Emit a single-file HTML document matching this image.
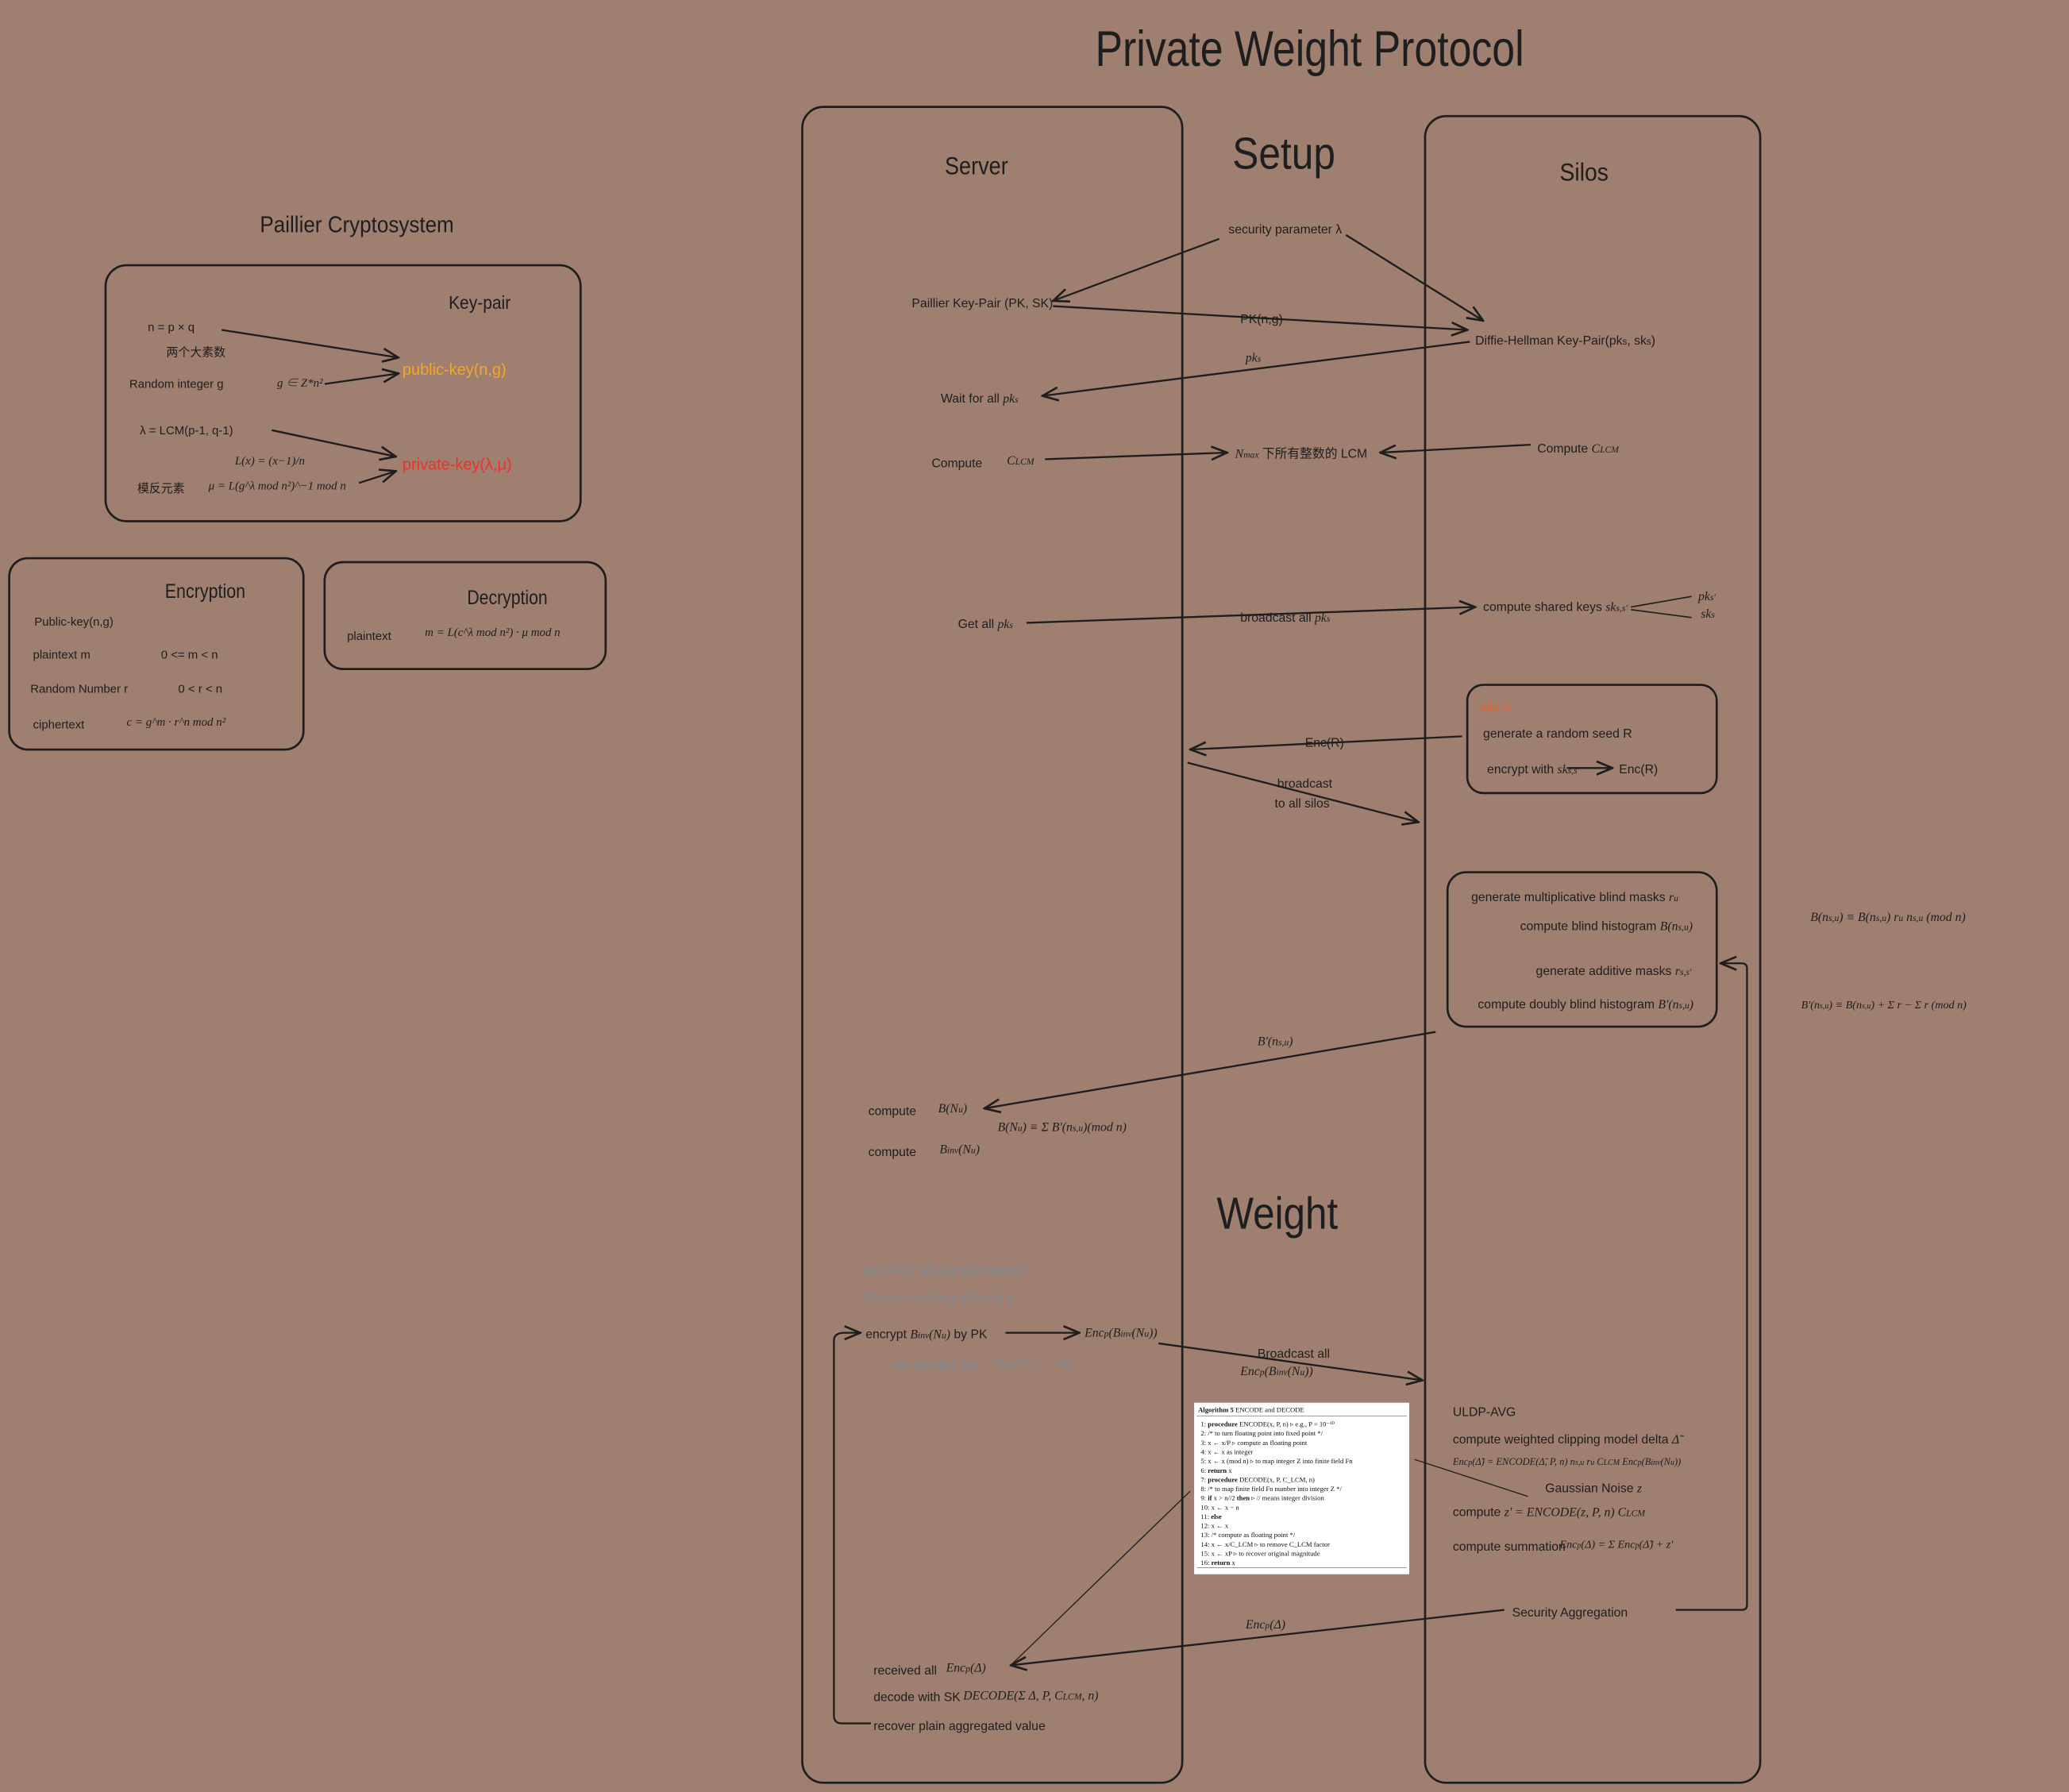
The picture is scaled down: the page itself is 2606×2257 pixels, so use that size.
<!DOCTYPE html>
<html><head><meta charset="utf-8">
<style>
html,body{margin:0;padding:0;background:#9f7f70;}
svg{display:block}
text{font-family:"Liberation Sans","Noto Sans CJK SC",sans-serif;fill:#1e1e1e;}
.m{font-family:"Liberation Serif","Noto Serif CJK SC",serif;font-style:italic;}
.g{fill:#7f8a96}
.alg text{font-family:"Liberation Serif",serif;fill:#111;font-size:5.2px}
</style></head>
<body>
<svg width="2606" height="2257" viewBox="0 0 1568 1358" xmlns="http://www.w3.org/2000/svg">
<defs><marker id="a" markerWidth="14" markerHeight="12" refX="13" refY="6" orient="auto" markerUnits="userSpaceOnUse"><path d="M1 1 L13 6 L1 11" fill="none" stroke="#1e1e1e" stroke-width="1.6"/></marker></defs>
<rect width="1568" height="1358" fill="#9f7f70"/>
<g fill="none" stroke="#1e1e1e" stroke-width="1.6">
<rect x="80" y="201" width="360" height="194" rx="16"/>
<rect x="7" y="423" width="223" height="145" rx="14"/>
<rect x="246" y="426" width="213" height="81" rx="14"/>
<rect x="608" y="81" width="288" height="1270" rx="16"/>
<rect x="1080" y="88" width="254" height="1263" rx="16"/>
<rect x="1112" y="519" width="189" height="82" rx="12"/>
<rect x="1097" y="661" width="204" height="117" rx="14"/>
</g>
<text x="830" y="50" font-size="38" textLength="325" lengthAdjust="spacingAndGlyphs">Private Weight Protocol</text>
<text x="934" y="128" font-size="34" textLength="78" lengthAdjust="spacingAndGlyphs">Setup</text>
<text x="922" y="931" font-size="34" textLength="92" lengthAdjust="spacingAndGlyphs">Weight</text>
<text x="716" y="132" font-size="19" textLength="48" lengthAdjust="spacingAndGlyphs">Server</text>
<text x="1182" y="137" font-size="19" textLength="37" lengthAdjust="spacingAndGlyphs">Silos</text>
<text x="197" y="176" font-size="17" textLength="147" lengthAdjust="spacingAndGlyphs">Paillier Cryptosystem</text>
<text x="340" y="234" font-size="14" textLength="47" lengthAdjust="spacingAndGlyphs">Key-pair</text>
<text x="125" y="453" font-size="15" textLength="61" lengthAdjust="spacingAndGlyphs">Encryption</text>
<text x="354" y="458" font-size="15" textLength="61" lengthAdjust="spacingAndGlyphs">Decryption</text>

<g font-size="9">
<text x="112" y="251">n = p × q</text>
<text x="126" y="270">两个大素数</text>
<text x="98" y="294">Random integer g</text>
<text x="210" y="293" class="m">g ∈ Z*n²</text>
<text x="106" y="329">λ = LCM(p-1, q-1)</text>
<text x="178" y="352" class="m">L(x) = (x−1)/n</text>
<text x="104" y="373">模反元素</text>
<text x="158" y="371" class="m">μ = L(g^λ mod n²)^−1 mod n</text>
<text x="26" y="474">Public-key(n,g)</text>
<text x="25" y="499">plaintext m</text>
<text x="122" y="499">0 &lt;= m &lt; n</text>
<text x="23" y="525">Random Number r</text>
<text x="135" y="525">0 &lt; r &lt; n</text>
<text x="25" y="552">ciphertext</text>
<text x="96" y="550" class="m">c = g^m · r^n mod n²</text>
<text x="263" y="485">plaintext</text>
<text x="322" y="482" class="m">m = L(c^λ mod n²) · μ mod n</text>
</g>
<text x="305" y="284" font-size="12" style="fill:#f5a623">public-key(n,g)</text>
<text x="305" y="356" font-size="12" style="fill:#e8322c">private-key(λ,μ)</text>

<g fill="none" stroke="#1e1e1e" stroke-width="1.4" marker-end="url(#a)">
<path d="M168 250 L302 271"/><path d="M246 291 L302 283"/>
<path d="M206 326 L300 346"/><path d="M272 366 L300 357"/>
<path d="M924 181 L798 228"/><path d="M1020 178 L1124 243"/>
<path d="M798 232 L1112 250"/><path d="M1114 259 L790 300"/>
<path d="M792 348 L930 343"/><path d="M1160 337 L1046 343"/>
<path d="M778 472 L1118 460"/>
<path d="M1108 558 L902 568"/><path d="M900 578 L1075 623"/>
<path d="M1188 582 L1222 582"/>
<path d="M1088 782 L746 840"/>
<path d="M762 1010 L818 1010"/><path d="M878 1018 L1078 1046"/>
<path d="M1140 1220 L766 1262"/>
<path d="M1270 1220 L1320 1220 Q1324 1220 1324 1216 L1324 734 Q1324 730 1320 730 L1304 730"/>
<path d="M660 1306 L638 1306 Q632 1306 632 1300 L632 1016 Q632 1010 640 1010 L652 1010"/>
</g>
<path d="M1236 460 L1282 452 M1236 462 L1282 468" stroke="#1e1e1e" fill="none" stroke-width="1"/>
<path d="M766 1262 L902 1130 M1158 1134 L1072 1106" stroke="#1e1e1e" fill="none" stroke-width="0.8"/>

<g font-size="9.5">
<text x="931" y="177">security parameter λ</text>
<text x="691" y="233">Paillier Key-Pair (PK, SK)</text>
<text x="940" y="245">PK(n,g)</text>
<text x="1118" y="261">Diffie-Hellman Key-Pair(pk<tspan font-size="7">s</tspan>, sk<tspan font-size="7">s</tspan>)</text>
<text x="944" y="274" class="m">pk<tspan font-size="7">s</tspan></text>
<text x="713" y="305">Wait for all  <tspan class="m">pk<tspan font-size="7">s</tspan></tspan></text>
<text x="706" y="354">Compute</text><text x="763" y="352" class="m">C<tspan font-size="7">LCM</tspan></text>
<text x="936" y="347"><tspan class="m">N<tspan font-size="7">max</tspan></tspan> 下所有整数的 LCM</text>
<text x="1165" y="343">Compute <tspan class="m">C<tspan font-size="7">LCM</tspan></tspan></text>
<text x="726" y="476">Get all  <tspan class="m">pk<tspan font-size="7">s</tspan></tspan></text>
<text x="940" y="471">broadcast all <tspan class="m">pk<tspan font-size="7">s</tspan></tspan></text>
<text x="1124" y="463">compute shared keys <tspan class="m">sk<tspan font-size="7">s,s'</tspan></tspan></text>
<text x="1287" y="455" class="m">pk<tspan font-size="7">s'</tspan></text>
<text x="1289" y="468" class="m">sk<tspan font-size="7">s</tspan></text>
<text x="989" y="566">Enc(R)</text>
<text x="968" y="597">broadcast</text><text x="966" y="612">to all silos</text>
<text x="1122" y="539" style="fill:#e8632c">silo-0</text>
<text x="1124" y="559">generate a random seed R</text>
<text x="1127" y="586">encrypt with  <tspan class="m">sk<tspan font-size="7">s,s'</tspan></tspan></text>
<text x="1227" y="586">Enc(R)</text>
<text x="1115" y="683">generate multiplicative blind masks <tspan class="m">r<tspan font-size="7">u</tspan></tspan></text>
<text x="1152" y="705">compute blind histogram <tspan class="m">B(n<tspan font-size="7">s,u</tspan>)</tspan></text>
<text x="1164" y="739">generate additive masks <tspan class="m">r<tspan font-size="7">s,s'</tspan></tspan></text>
<text x="1120" y="764">compute doubly blind histogram <tspan class="m">B'(n<tspan font-size="7">s,u</tspan>)</tspan></text>
<text x="1372" y="698" class="m">B(n<tspan font-size="7">s,u</tspan>) ≡ B(n<tspan font-size="7">s,u</tspan>) r<tspan font-size="7">u</tspan> n<tspan font-size="7">s,u</tspan> (mod n)</text>
<text x="1365" y="764" class="m" font-size="8.5">B'(n<tspan font-size="6">s,u</tspan>) ≡ B(n<tspan font-size="6">s,u</tspan>) + Σ r − Σ r (mod n)</text>
<text x="953" y="792" class="m">B'(n<tspan font-size="7">s,u</tspan>)</text>
<text x="658" y="845">compute</text><text x="711" y="843" class="m">B(N<tspan font-size="7">u</tspan>)</text>
<text x="756" y="857" class="m">B(N<tspan font-size="7">u</tspan>) ≡ Σ B'(n<tspan font-size="7">s,u</tspan>)(mod n)</text>
<text x="658" y="876">compute</text><text x="712" y="874" class="m">B<tspan font-size="7">inv</tspan>(N<tspan font-size="7">u</tspan>)</text>
<text x="655" y="966" class="g" font-size="11" textLength="120" lengthAdjust="spacingAndGlyphs">user-level sub-sample required</text>
<text x="655" y="987" class="g" font-size="11" textLength="113" lengthAdjust="spacingAndGlyphs">Poisson sampling with prob q</text>
<text x="656" y="1014">encrypt  <tspan class="m">B<tspan font-size="7">inv</tspan>(N<tspan font-size="7">u</tspan>)</tspan> by PK</text>
<text x="822" y="1013" class="m">Enc<tspan font-size="7">p</tspan>(B<tspan font-size="7">inv</tspan>(N<tspan font-size="7">u</tspan>))</text>
<text x="675" y="1038" class="g" font-size="11" textLength="67" lengthAdjust="spacingAndGlyphs">non-selected user</text><text x="754" y="1037" class="m g" font-size="10">B<tspan font-size="7">inv</tspan>(N<tspan font-size="7">u</tspan>)</text><text x="800" y="1038" class="g" font-size="11">=0</text>
<text x="953" y="1029">Broadcast all</text>
<text x="940" y="1042" class="m">Enc<tspan font-size="7">p</tspan>(B<tspan font-size="7">inv</tspan>(N<tspan font-size="7">u</tspan>))</text>
<text x="1101" y="1073">ULDP-AVG</text>
<text x="1101" y="1094">compute weighted clipping model delta  <tspan class="m">Δ̃</tspan></text>
<text x="1101" y="1110" class="m" font-size="7.5">Enc<tspan font-size="6">p</tspan>(Δ̃) = ENCODE(Δ̃, P, n) n<tspan font-size="6">s,u</tspan> r<tspan font-size="6">u</tspan> C<tspan font-size="6">LCM</tspan> Enc<tspan font-size="6">p</tspan>(B<tspan font-size="6">inv</tspan>(N<tspan font-size="6">u</tspan>))</text>
<text x="1171" y="1131">Gaussian Noise  <tspan class="m">z</tspan></text>
<text x="1101" y="1149">compute  <tspan class="m">z' = ENCODE(z, P, n) C<tspan font-size="7">LCM</tspan></tspan></text>
<text x="1101" y="1175">compute summation</text>
<text x="1182" y="1173" class="m" font-size="8.5">Enc<tspan font-size="6">p</tspan>(Δ) = Σ Enc<tspan font-size="6">p</tspan>(Δ̃) + z'</text>
<text x="1146" y="1225">Security Aggregation</text>
<text x="944" y="1234" class="m">Enc<tspan font-size="7">p</tspan>(Δ)</text>
<text x="662" y="1269">received all</text><text x="717" y="1267" class="m">Enc<tspan font-size="7">p</tspan>(Δ)</text>
<text x="662" y="1289">decode with SK</text><text x="730" y="1288" class="m">DECODE(Σ Δ, P, C<tspan font-size="7">LCM</tspan>, n)</text>
<text x="662" y="1311">recover plain aggregated value</text>
</g>

<g class="alg">
<rect x="905" y="1063" width="163" height="130" fill="#fff"/>
<line x1="907" y1="1073" x2="1066" y2="1073" stroke="#888" stroke-width="0.5"/>
<line x1="907" y1="1188" x2="1066" y2="1188" stroke="#888" stroke-width="0.5"/>
<text x="908" y="1070" font-weight="bold">Algorithm 5 <tspan font-weight="normal">ENCODE and DECODE</tspan></text>
<text x="910" y="1081">1: <tspan font-weight="bold">procedure</tspan> ENCODE(x, P, n)          ▹ e.g., P = 10⁻¹⁰</text>
<text x="910" y="1088">2:     /* to turn floating point into fixed point */</text>
<text x="910" y="1095">3:     x ← x/P                ▹ compute as floating point</text>
<text x="910" y="1102">4:     x ← x as integer</text>
<text x="910" y="1109">5:     x ← x (mod n)   ▹ to map integer Z into finite field Fn</text>
<text x="910" y="1116">6:     <tspan font-weight="bold">return</tspan> x</text>
<text x="910" y="1123">7: <tspan font-weight="bold">procedure</tspan> DECODE(x, P, C_LCM, n)</text>
<text x="910" y="1130">8:     /* to map finite field Fn number into integer Z */</text>
<text x="910" y="1137">9:     <tspan font-weight="bold">if</tspan> x &gt; n//2 <tspan font-weight="bold">then</tspan>      ▹ // means integer division</text>
<text x="910" y="1144">10:        x ← x − n</text>
<text x="910" y="1151">11:    <tspan font-weight="bold">else</tspan></text>
<text x="910" y="1158">12:        x ← x</text>
<text x="910" y="1165">13:    /* compute as floating point */</text>
<text x="910" y="1172">14:    x ← x/C_LCM          ▹ to remove C_LCM factor</text>
<text x="910" y="1179">15:    x ← xP          ▹ to recover original magnitude</text>
<text x="910" y="1186">16:    <tspan font-weight="bold">return</tspan> x</text>
</g>
</svg>
</body></html>
